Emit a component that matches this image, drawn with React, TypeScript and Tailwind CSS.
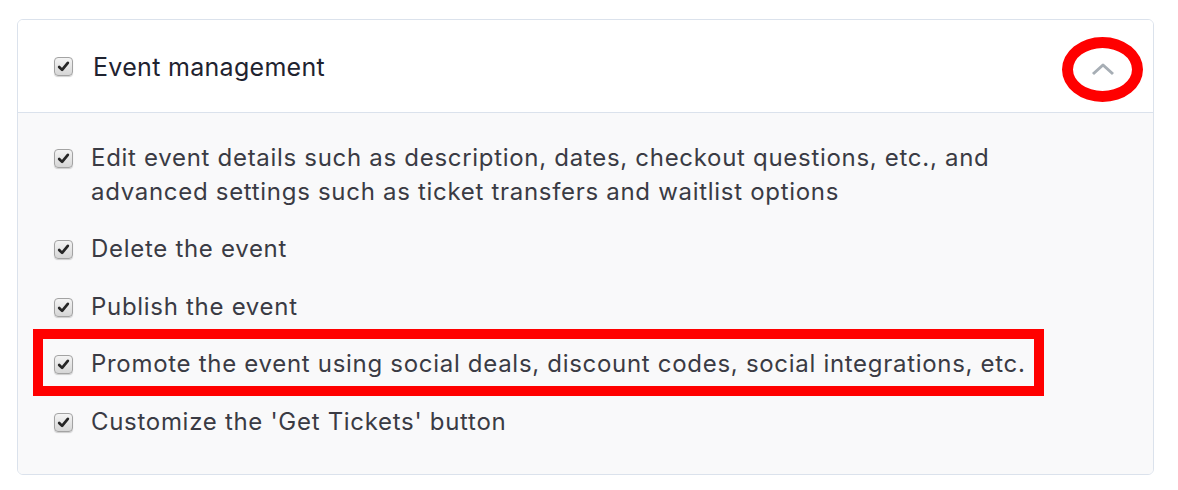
import React from "react";

function Check() {
  return (
    <span className="relative inline-flex h-[19px] w-[19px] shrink-0 items-center justify-center rounded-[4px] border border-[#a3a3a3] bg-gradient-to-b from-[#f4f4f4] to-[#d6d6d6] shadow-[0_1px_1px_rgba(0,0,0,0.18)]">
      <svg width="13" height="13" viewBox="0 0 12 12">
        <path d="M2 6.4 L4.7 9.1 L10 2.6" fill="none" stroke="#262626" strokeWidth="2.5" strokeLinecap="round" strokeLinejoin="round" />
      </svg>
    </span>
  );
}

const items = [
  "Edit event details such as description, dates, checkout questions, etc., and advanced settings such as ticket transfers and waitlist options",
  "Delete the event",
  "Publish the event",
  "Promote the event using social deals, discount codes, social integrations, etc.",
  "Customize the 'Get Tickets' button",
];

export default function App() {
  return (
    <div className="relative h-[490px] w-[1178px] bg-white pl-[17px] pt-[19px]" style={{ fontFamily: "Inter, 'Noto Sans', sans-serif" }}>
      <div className="w-[1137px] overflow-hidden rounded-[6px] border border-[#dbe2ec]">
        <div className="flex h-[93px] items-center border-b border-[#dbe2ec] bg-white pl-[36px] pr-[38px]">
          <span className="mt-[1px]">
            <Check />
          </span>
          <span className="ml-[20px] mt-[2px] text-[25px] leading-[34px] tracking-[0.3px] text-[#1f2330]">Event management</span>
          <svg className="ml-auto mt-[5px]" width="24" height="14" viewBox="0 0 24 14">
            <path d="M2 12 L12 3 L22 12" fill="none" stroke="#a7aeb5" strokeWidth="3" strokeLinejoin="round" />
          </svg>
        </div>
        <div className="flex h-[361px] flex-col gap-[23.5px] bg-[#f9f9fa] pl-[36px] pr-[90px] pt-[27.5px]">
          {items.map((t) => (
            <div key={t} className="flex items-start">
              <span className="mt-[6px]">
                <Check />
              </span>
              <span className="ml-[18px] text-[24px] leading-[34px] tracking-[0.7px] text-[#3a3b44]">{t}</span>
            </div>
          ))}
        </div>
      </div>
      <div className="absolute left-[33px] top-[329px] h-[67px] w-[1011px] border-[10px] border-[#ff0000]" />
      <div className="absolute left-[1062px] top-[37px] h-[65px] w-[81px] rounded-[50%] border-[11px] border-[#ff0000]" />
    </div>
  );
}
